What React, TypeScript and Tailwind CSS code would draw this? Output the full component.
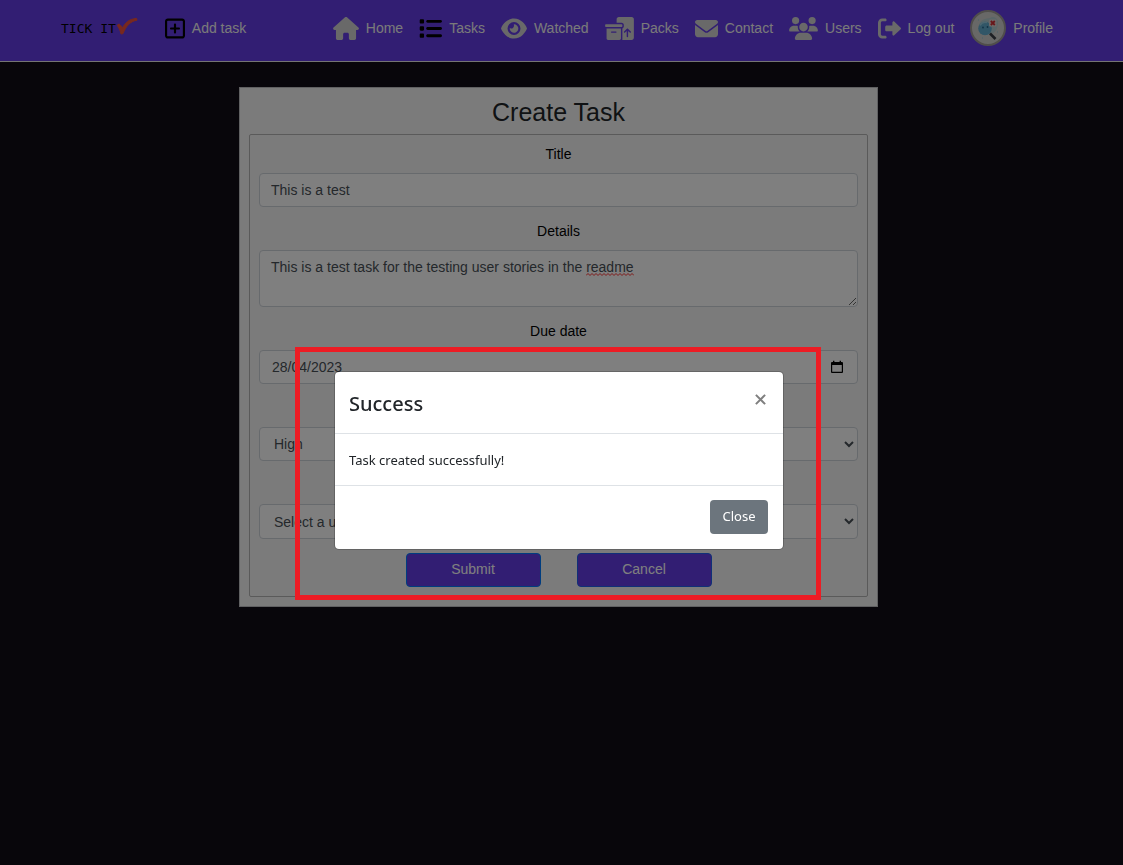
import type { ReactNode } from "react";
import {
  FaBoxesPacking,
  FaEnvelope,
  FaEye,
  FaHouse,
  FaList,
  FaRegSquarePlus,
  FaUsers,
} from "react-icons/fa6";

function NavItem({ icon, label }: { icon: ReactNode; label: string }) {
  return (
    <a href="#" className="flex items-center gap-[7px] whitespace-nowrap text-[#f4f4f4]">
      <span className="text-[#d2d2d2]">{icon}</span>
      <span className="leading-5">{label}</span>
    </a>
  );
}

function Logo() {
  return (
    <a href="#" className="flex items-center font-['DejaVu_Sans_Mono',monospace] text-[13px] leading-5 text-black">
      <span className="pt-0.5">TICK IT</span>
      <svg viewBox="0 0 22 18" className="mb-1 h-[18px] w-[22px]" aria-hidden="true">
        <path
          d="M1.200 8.200 3 7C4.800 8.200 5.700 9.600 6.300 11.200 9 6 12.600 2 20.600 1.400L21 3.200C14.400 4.200 10 9 7 16.600L5 17C4.200 13.400 3 10.800 1.200 8.200Z"
          fill="#f0503c"
          stroke="#f0503c"
        />
      </svg>
    </a>
  );
}

function LogOutIcon() {
  return (
    <svg viewBox="0 0 512 512" className="h-[23px] w-[23px]" fill="currentColor" aria-hidden="true">
      <path d="M96 480h64C177.700 480 192 465.700 192 448S177.700 416 160 416H96c-17.670 0-32-14.330-32-32V128c0-17.670 14.330-32 32-32h64C177.700 96 192 81.670 192 64S177.700 32 160 32H96C42.980 32 0 74.980 0 128v256C0 437 42.980 480 96 480z" />
      <path
        d="M504.800 238.500l-144.100-136c-6.975-6.578-17.200-8.375-26-4.594c-8.803 3.797-14.510 12.470-14.510 22.050l-.0918 72l-128-.001c-17.690 0-32.020 14.330-32.020 32v64c0 17.670 14.340 32 32.020 32l128 .001l.0918 71.100c0 9.578 5.707 18.250 14.510 22.050c8.803 3.781 19.030 1.984 26-4.594l144.100-136C514.400 264.400 514.400 247.600 504.800 238.500z"
      />
    </svg>
  );
}

function Avatar() {
  return (
    <svg viewBox="0 0 36 36" className="h-9 w-9" aria-hidden="true">
      <circle cx="18" cy="18" r="17" fill="#d0d0ce" stroke="#a09c96" strokeWidth="2" />
      <path d="M9 15C11 8 17 9 20 8c4-3 9 1 8 6-1 4-1 7-5 9s-12 3-14-2Z" fill="#b4ccd0" />
      <circle cx="15" cy="18.500" r="6.800" fill="#62acce" />
      <path d="M10 15.500a6 6 0 0 1 7-3" fill="none" stroke="#98cce0" strokeWidth="1.500" />
      <circle cx="13" cy="17.500" r="0.900" fill="#23648c" />
      <circle cx="17.500" cy="17" r="0.900" fill="#23648c" />
      <path d="m20 23.500 5.500 5.500" stroke="#3c4148" strokeWidth="2.600" />
      <rect x="19" y="9.500" width="7.500" height="7" rx="1" fill="#dcd2d2" />
      <path d="m20.800 11 4 4m0-4-4 4" stroke="#d02c34" strokeWidth="1.800" />
      <path d="M8 10h1M27 22h1M12 28h1" stroke="#8ec6d8" strokeWidth="1.200" />
    </svg>
  );
}

function Header() {
  return (
    <header className="flex items-center justify-between border-b border-[#e8e8e8] bg-[#643ce6] pt-[10px] pr-[70px] pb-[15px] pl-[61px]">
      <div className="flex items-center gap-[27px]">
        <Logo />
        <NavItem icon={<FaRegSquarePlus className="h-[23px] w-5 text-black" />} label="Add task" />
      </div>
      <nav className="flex items-center gap-4">
        <NavItem icon={<FaHouse className="h-[23px] w-[26px]" />} label="Home" />
        <NavItem icon={<FaList className="h-[23px] w-[23px] text-black" />} label="Tasks" />
        <NavItem icon={<FaEye className="h-[23px] w-[26px]" />} label="Watched" />
        <NavItem icon={<FaBoxesPacking className="h-[23px] w-[29px]" />} label="Packs" />
        <NavItem icon={<FaEnvelope className="h-[23px] w-[23px]" />} label="Contact" />
        <NavItem icon={<FaUsers className="h-[23px] w-[29px]" />} label="Users" />
        <NavItem icon={<LogOutIcon />} label="Log out" />
        <NavItem icon={<Avatar />} label="Profile" />
      </nav>
    </header>
  );
}

function Field({ id, label, children }: { id: string; label: string; children: ReactNode }) {
  return (
    <div className="mb-[14px]">
      <label htmlFor={id} className="mb-2 block text-center leading-[21px] text-black">
        {label}
      </label>
      {children}
    </div>
  );
}

function TaskForm() {
  return (
    <section className="w-full max-w-[639px] border border-[#c0c0c4] bg-[#f7f7f7] p-[9px]">
      <h1 className="mb-[7px] text-center text-[25px] leading-[30px] text-[#212529]">Create Task</h1>
      <form className="rounded-xs border border-[#b4b4b4] p-[9px]" onSubmit={(e) => e.preventDefault()}>
        <Field id="title" label="Title">
          <input
            id="title"
            defaultValue="This is a test"
            className="block h-[34px] w-full rounded border border-[#ced4da] bg-white px-[11px] text-[#495057]"
          />
        </Field>
        <Field id="details" label="Details">
          <div className="relative">
            <textarea
              id="details"
              defaultValue="This is a test task for the testing user stories in the readme"
              className="block h-[57px] w-full rounded border border-[#ced4da] bg-white px-[11px] py-[6px] leading-[21px] text-[#495057]"
            />
            <svg className="pointer-events-none absolute top-[23px] left-[327px] h-[3px] w-[48px]" aria-hidden="true">
              <path
                d="M0 2.500l2-2 2 2 2-2 2 2 2-2 2 2 2-2 2 2 2-2 2 2 2-2 2 2 2-2 2 2 2-2 2 2 2-2 2 2 2-2 2 2 2-2 2 2 2-2 2 2"
                fill="none"
                stroke="#ff3030"
              />
            </svg>
          </div>
        </Field>
        <Field id="due" label="Due date">
          <div className="flex h-[34px] items-center rounded border border-[#ced4da] bg-white pr-[13px] pl-3 text-[#495057]">
            <input id="due" defaultValue="28/04/2023" className="min-w-0 flex-1" />
            <button type="button" aria-label="Open calendar" className="text-black">
              <svg viewBox="0 0 14 14" className="h-[14px] w-[14px]" aria-hidden="true">
                <path
                  d="M12 2h-1V.7H9.600V2H4.400V.7H3V2H2a1 1 0 0 0-1 1v9a1 1 0 0 0 1 1h10a1 1 0 0 0 1-1V3a1 1 0 0 0-1-1Zm-.2 9.800H2.200V5h9.600Z"
                  fill="currentColor"
                />
              </svg>
            </button>
          </div>
        </Field>
        <Field id="priority" label="Priority">
          <select
            id="priority"
            className="block h-[34px] w-full rounded border border-[#ced4da] bg-white px-[10px] text-[#495057]"
          >
            <option>High</option>
          </select>
        </Field>
        <Field id="assignee" label="Assigned to">
          <select
            id="assignee"
            className="block h-[35px] w-full rounded border border-[#ced4da] bg-white px-[10px] text-[#495057]"
          >
            <option>Select a user</option>
          </select>
        </Field>
        <div className="flex justify-center gap-9">
          <button type="submit" className="h-[34px] w-[135px] rounded border border-[#007bff] bg-[#643ce6] pb-0.5 text-white">
            Submit
          </button>
          <button type="button" className="h-[34px] w-[135px] rounded border border-[#2060f0] bg-[#643ce6] pb-0.5 text-white">
            Cancel
          </button>
        </div>
      </form>
    </section>
  );
}

function SuccessDialog() {
  return (
    <div className="fixed inset-0 flex items-start justify-center bg-black/50 pt-[371px] pr-[5px]">
      <div className="relative w-full max-w-[450px]">
        <div
          role="dialog"
          aria-labelledby="dialog-title"
          className="rounded-[5px] border border-black/20 bg-white bg-clip-padding font-['Noto_Sans','Open_Sans',sans-serif] text-[13px] text-[#212529]"
        >
          <div className="flex items-start justify-between border-b border-[#dee2e6] px-[14px] pt-[15px] pb-[13px]">
            <h2 id="dialog-title" className="text-xl leading-[33px] font-medium">
              Success
            </h2>
            <button
              type="button"
              aria-label="Close dialog"
              className="flex h-[25px] w-[18px] items-center justify-center text-[#7f7f7f]"
            >
              <svg viewBox="0 0 10 10" className="h-[11px] w-[11px]" aria-hidden="true">
                <path d="m.8.8 8.400 8.400m0-8.400L.8 9.200" stroke="currentColor" strokeWidth="1.800" />
              </svg>
            </button>
          </div>
          <p className="px-[14px] pt-[15px] pb-[14px] leading-[22px]">Task created successfully!</p>
          <div className="flex justify-end border-t border-[#dee2e6] px-[15px] pt-[14px] pb-[15px]">
            <button type="button" className="h-[34px] w-[58px] rounded bg-[#6c757d] text-white">
              Close
            </button>
          </div>
        </div>
        <div className="pointer-events-none absolute -top-6 -right-[37px] -bottom-[50px] -left-[39px] border-5 border-[#ed1c24]" />
      </div>
    </div>
  );
}

export default function App() {
  return (
    <div className="min-h-screen bg-[#100c16] font-['Liberation_Sans',Arial,sans-serif] text-[14px]">
      <Header />
      <main className="flex justify-center pt-[25px] pr-[6px]">
        <TaskForm />
      </main>
      <SuccessDialog />
    </div>
  );
}
